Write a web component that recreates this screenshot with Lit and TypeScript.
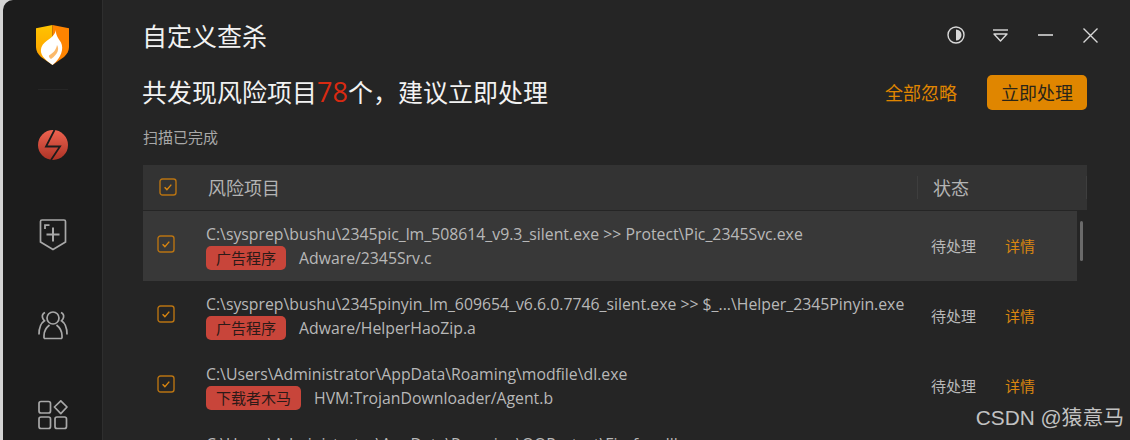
import { LitElement, css, html } from 'lit'
import { customElement } from 'lit/decorators.js'

type Risk = { path: string; tag: string; name: string }

const RISKS: Risk[] = [
  { path: 'C:\\sysprep\\bushu\\2345pic_lm_508614_v9.3_silent.exe >> Protect\\Pic_2345Svc.exe', tag: '广告程序', name: 'Adware/2345Srv.c' },
  { path: 'C:\\sysprep\\bushu\\2345pinyin_lm_609654_v6.6.0.7746_silent.exe >> $_...\\Helper_2345Pinyin.exe', tag: '广告程序', name: 'Adware/HelperHaoZip.a' },
  { path: 'C:\\Users\\Administrator\\AppData\\Roaming\\modfile\\dl.exe', tag: '下载者木马', name: 'HVM:TrojanDownloader/Agent.b' },
  { path: 'C:\\Users\\Administrator\\AppData\\Roaming\\QQProtect\\Firefox.dll', tag: '广告程序', name: 'Adware/Agent.c' },
]

const check = html`<svg class="check" viewBox="0 0 18 18" width="18" height="18">
  <rect x="1" y="1" width="16" height="16" rx="2.5" fill="none" stroke="#b87312" stroke-width="1.4"></rect>
  <path d="M5.6 9.2l2.3 2.4 4.4-5" fill="none" stroke="#d98610" stroke-width="1.4"></path>
</svg>`

@customElement('app-root')
export class AppRoot extends LitElement {
  private logo() {
    return html`<svg viewBox="0 0 33 40" width="33" height="40">
      <defs>
        <linearGradient id="lg" x1="0" y1="0" x2="0" y2="1">
          <stop offset="0" stop-color="#ffc400"></stop>
          <stop offset="1" stop-color="#ff9a00"></stop>
        </linearGradient>
      </defs>
      <path d="M16.5 0L0 3.2V22c0 4 2 7 5 10l11.500 8z" fill="url(#lg)"></path>
      <path d="M16.500 0L33 3.200V22c0 4-2 7-5 10l-11.500 8z" fill="#ff8400"></path>
      <path d="M20 5c-.5 5 2 7.500 5 12.500 3 6 .5 15-8.500 22.500C8 34 3 29 5.500 22c1.500-4 4.500-5.500 8.500-8.500 3-2.500 5-4.500 6-8.500z" fill="#fff"></path>
      <path d="M21 20c2.500 4 1 9-6 14 -1.500-1-2.500-2.500-2-3.500 4-2.500 7-5 8-10.500z" fill="#f9a23a" opacity=".75"></path>
    </svg>`
  }

  private bolt() {
    return html`<svg viewBox="0 0 30 30" width="30" height="30">
      <defs>
        <linearGradient id="bg" x1="0" y1="0" x2="0" y2="1">
          <stop offset="0" stop-color="#ee6350"></stop>
          <stop offset="1" stop-color="#ad3326"></stop>
        </linearGradient>
      </defs>
      <circle cx="15" cy="15" r="15" fill="url(#bg)"></circle>
      <path d="M16.500 0L8 16.500h14L13 30" fill="none" stroke="#1c1c1c" stroke-width="1.800"></path>
    </svg>`
  }

  private shieldPlus() {
    return html`<svg viewBox="0 0 28 32" width="28" height="32" fill="none" stroke="#a8a8a8" stroke-width="1.700">
      <path d="M1.500 2.500q0-1.500 1.500-1.500h22q1.500 0 1.500 1.500V23L14 30.500 1.500 23z"></path>
      <path d="M6 10V6.200h4.500" stroke-width="1.800"></path>
      <path d="M14 8.500v14M7.500 15.500h13" stroke-width="2"></path>
    </svg>`
  }

  private users() {
    return html`<svg viewBox="0 0 30 30" width="30" height="30" fill="none" stroke="#a8a8a8" stroke-width="1.700">
      <circle cx="15" cy="8" r="6"></circle>
      <path d="M6 28.500v-3c0-5 3-8.500 5.500-10.500M24 28.500v-3c0-5-3-8.500-5.500-10.500M6 28.500h18"></path>
      <path d="M7 2.500c-2 1-3 3-2.500 5 .3 1.500 1.200 2.500 2 3.300C3 13 1 17 1 24.500M23 2.500c2 1 3 3 2.500 5-.3 1.500-1.200 2.500-2 3.300 3.500 2.200 5.500 6.200 5.500 13.700"></path>
    </svg>`
  }

  private apps() {
    return html`<svg viewBox="0 0 30 30" width="30" height="30" fill="none" stroke="#a8a8a8" stroke-width="1.700">
      <rect x="1" y="1.500" width="11.500" height="11.500" rx="2"></rect>
      <rect x="1" y="17" width="11.500" height="11.500" rx="2"></rect>
      <rect x="17" y="17" width="11.500" height="11.500" rx="2"></rect>
      <path d="M22.800 0.800l6.200 6.200-6.200 6.700-6.400-6.700z" stroke-linejoin="round"></path>
    </svg>`
  }

  private windowIcons() {
    return html`<div class="win">
      <svg class="contrast" viewBox="0 0 18 18" width="18" height="18">
        <circle cx="9" cy="9" r="8" fill="none" stroke="#d8d8d8" stroke-width="1.400"></circle>
        <path d="M9 3.500a5.500 5.500 0 0 1 0 11z" fill="#d8d8d8"></path>
      </svg>
      <svg viewBox="0 0 15 13" width="15" height="13" fill="none" stroke="#d8d8d8" stroke-width="1.400">
        <path d="M0 1h15"></path>
        <path d="M1 5h13L7.500 12z" stroke-linejoin="round"></path>
      </svg>
      <svg viewBox="0 0 15 2" width="15" height="2"><path d="M0 1h15" stroke="#d8d8d8" stroke-width="1.600"></path></svg>
      <svg viewBox="0 0 15 15" width="15" height="15"><path d="M.5.500l14 14M14.500.500l-14 14" stroke="#d8d8d8" stroke-width="1.400"></path></svg>
    </div>`
  }

  public render() {
    return html`
      <aside class="side">
        <div class="logo">${this.logo()}</div>
        <div class="nav">${this.bolt()}</div>
        <div class="nav">${this.shieldPlus()}</div>
        <div class="nav">${this.users()}</div>
        <div class="nav">${this.apps()}</div>
      </aside>
      <main class="main">
        <div class="titlebar">
          <h1>自定义查杀</h1>
          ${this.windowIcons()}
        </div>
        <div class="summary">
          <h2>共发现风险项目<em>78</em>个，建议立即处理</h2>
          <div class="actions">
            <a>全部忽略</a>
            <button>立即处理</button>
          </div>
        </div>
        <p class="progress">扫描已完成</p>
        <div class="thead">
          <span class="th-check">${check}</span>
          <span class="th-name">风险项目</span>
          <span class="th-state">状态</span>
        </div>
        <div class="list">
          ${RISKS.map(
            (r, i) => html`
              <div class="row ${i === 0 ? 'active' : ''}">
                <span class="row-check">${check}</span>
                <div class="info">
                  <div class="path">${r.path}</div>
                  <div class="meta"><span class="tag">${r.tag}</span><span class="name">${r.name}</span></div>
                </div>
                <span class="state">待处理</span>
                <a class="detail">详情</a>
              </div>
            `,
          )}
          <div class="scroll"></div>
        </div>
      </main>
      <div class="mark">CSDN @猿意马</div>
    `
  }

  public static styles = css`
    :host {
      display: flex;
      position: relative;
      width: 1130px;
      height: 440px;
      overflow: hidden;
      background: #d4d4d4;
      font-family: "Open Sans", "Noto Sans CJK SC", sans-serif;
      color: #c8c8c8;
    }
    .side {
      width: 99px;
      margin-left: 3px;
      flex: none;
      background: #1c1c1c;
      border-top-left-radius: 10px;
      display: flex;
      flex-direction: column;
    }
    .logo {
      height: 100px;
      flex: none;
      box-sizing: border-box;
      padding-top: 25px;
      display: flex;
      justify-content: center;
      align-items: flex-start;
      position: relative;
    }
    .logo::after {
      content: "";
      position: absolute;
      left: 35px;
      top: 89px;
      width: 30px;
      height: 1px;
      background: #262626;
    }
    .nav {
      height: 90px;
      flex: none;
      display: flex;
      align-items: center;
      justify-content: center;
    }
    .main {
      flex: 1;
      min-width: 0;
      background: #252525;
      border-left: 1px solid #2e2e2e;
      padding-left: 40px;
    }
    .titlebar {
      height: 74px;
      display: flex;
      justify-content: space-between;
      box-sizing: border-box;
      padding-top: 18px;
    }
    h1 {
      margin: 0 0 0 -1px;
      font-size: 25px;
      line-height: 36px;
      font-weight: 400;
      color: #f2f2f2;
    }
    .win {
      display: flex;
      align-items: center;
      height: 34px;
      margin-right: 32px;
      gap: 30px;
      justify-content: flex-end;
    }
    .contrast {
      margin-right: -2px;
    }
    .summary {
      display: flex;
      justify-content: space-between;
      align-items: center;
      height: 36px;
      padding-right: 43px;
    }
    h2 {
      margin: 0 0 0 -1px;
      font-size: 25px;
      line-height: 36px;
      font-weight: 400;
      color: #f2f2f2;
    }
    h2 em {
      font-style: normal;
      font-size: 27px;
      color: #d92a12;
    }
    .actions {
      display: flex;
      align-items: center;
      gap: 30px;
    }
    .actions a {
      font-size: 18px;
      color: #e08600;
    }
    button {
      width: 100px;
      height: 35px;
      padding: 0;
      border: 0;
      border-radius: 5px;
      background: #e08600;
      color: #2a2518;
      font: inherit;
      font-size: 18px;
    }
    .progress {
      margin: 17px 0 18px;
      font-size: 15px;
      line-height: 20px;
      color: #a8a8a8;
    }
    .thead {
      width: 944px;
      height: 45px;
      display: flex;
      align-items: center;
      background: #333333;
      margin-bottom: 1px;
      font-size: 18px;
      color: #b4b4b4;
    }
    .th-check {
      width: 65px;
      box-sizing: border-box;
      padding-left: 16px;
      margin-top: -2px;
      display: flex;
    }
    .th-name {
      width: 709px;
      margin-top: -2px;
    }
    .th-state {
      flex: 1;
      height: 23px;
      line-height: 25px;
      padding-left: 15px;
      border-left: 1px solid #3e3e3e;
      border-right: 1px solid #3e3e3e;
    }
    .list {
      position: relative;
    }
    .row {
      width: 934px;
      height: 70px;
      display: flex;
      align-items: center;
      font-size: 15px;
    }
    .row.active {
      background: #383838;
    }
    .row-check {
      width: 63px;
      box-sizing: border-box;
      padding-left: 14px;
      margin-top: -5px;
      display: flex;
    }
    .info {
      width: 725px;
      flex: none;
    }
    .path {
      font-size: 15.800px;
      line-height: 24px;
      color: #b8b8b8;
      white-space: nowrap;
    }
    .meta {
      display: flex;
      align-items: center;
      height: 24px;
    }
    .tag {
      height: 24px;
      line-height: 24px;
      padding: 0 10px;
      border-radius: 5px;
      background: #c8453a;
      color: #2c1a18;
      font-size: 15px;
    }
    .name {
      margin-left: 13px;
      font-size: 15.800px;
      color: #b8b8b8;
    }
    .state {
      width: 74px;
      flex: none;
      margin-top: -2px;
      color: #b8b8b8;
    }
    .detail {
      margin-top: -2px;
      color: #d98610;
    }
    .scroll {
      position: absolute;
      left: 937px;
      top: 10px;
      width: 3px;
      height: 40px;
      border-radius: 2px;
      background: #6a6a6a;
    }
    .mark {
      position: absolute;
      right: 6px;
      bottom: 9px;
      font-family: "Liberation Sans", "Noto Sans CJK SC", sans-serif;
      font-size: 20.800px;
      line-height: 26px;
      color: #c2c2c2;
    }
  `
}
